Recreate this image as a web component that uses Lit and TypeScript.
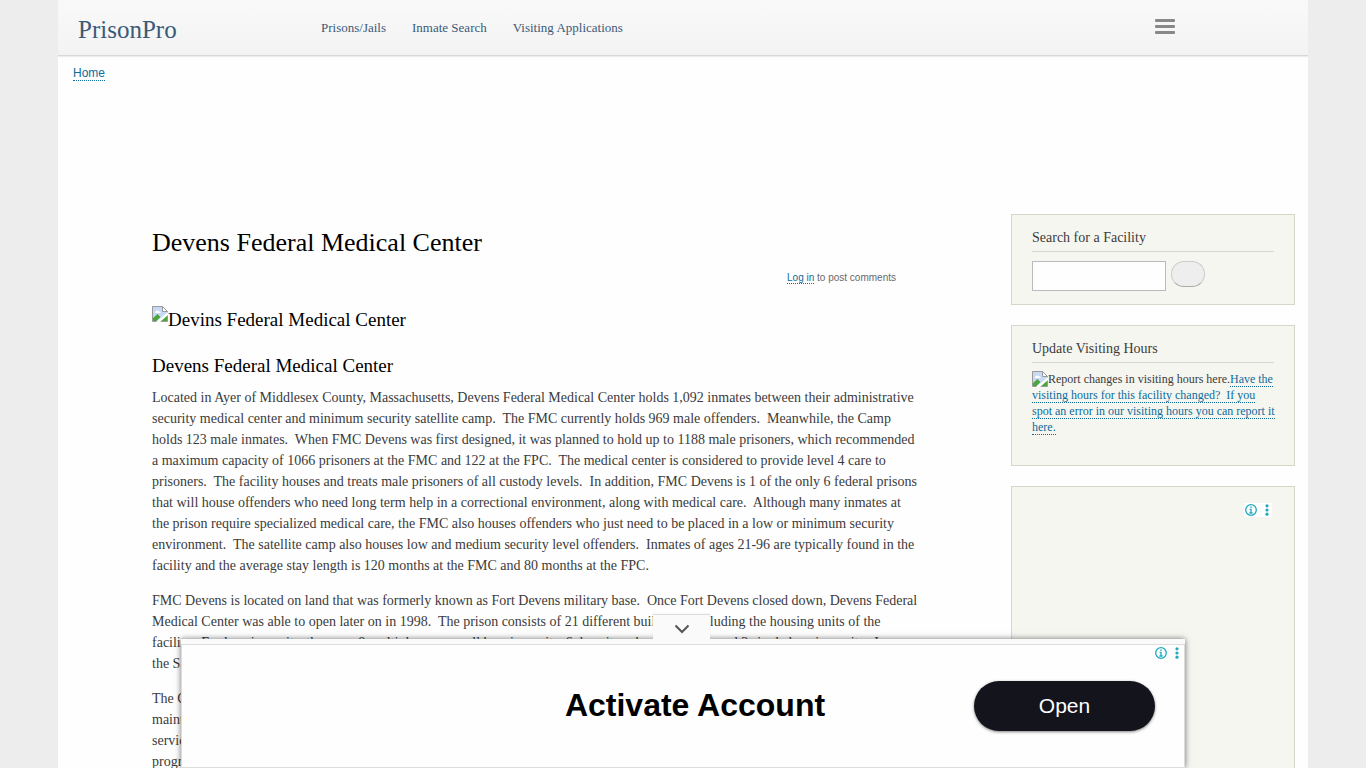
import { LitElement, html, css, svg } from "lit";
import { customElement } from "lit/decorators.js";

const brokenImage = html`<svg class="broken" width="16" height="16" viewBox="0 0 16 16" aria-hidden="true">
  <path d="M.5 15.5V.5h10l5 5v10z" fill="#c7d9f5" stroke="#9a9a9a" />
  <path d="M1 15v-3l4.5-4 3 3-4 4z M7 15l8-7v7z" fill="#4ca63c" />
  <path d="M3 6.5c0-2 3-3 4-1 2-.3 2 1.5 1 1.5H3.5z" fill="#fff" />
  <path d="M10.5.5v5h5z" fill="#fff" stroke="#9a9a9a" />
  <path d="M4 16L16 6v3L8 16z" fill="#fff" />
</svg>`;

const adChoices = html`<svg width="28" height="14" viewBox="0 0 28 14" aria-hidden="true">
  <circle cx="7" cy="7" r="5.3" fill="none" stroke="#21a9bd" stroke-width="1.3" />
  <path d="M7 3.5v1.4M5.6 6.3H7v3.6M5.4 10h3.2" fill="none" stroke="#21a9bd" stroke-width="1.3" />
  ${[2.8, 7, 11.2].map((y) => svg`<circle cx="23" cy=${y} r="1.6" fill="#21a9bd" />`)}
</svg>`;

@customElement("app-root")
export class AppRoot extends LitElement {
  static styles = css`
    :host {
      display: block;
      height: 100vh;
      overflow: hidden;
      background: #ededed;
      color: #3b3b3b;
      font: 14px/21px "Liberation Serif", serif;
    }
    * { box-sizing: border-box; }
    h1, h2, h3, p { margin: 0; font-weight: 400; }
    button { font: inherit; cursor: pointer; }
    .page {
      min-height: 100vh;
      margin: 0 58px;
      background: #fefefe;
    }
    .header {
      display: flex;
      align-items: center;
      height: 56px;
      padding: 0 133px 2px 20px;
      background: linear-gradient(#f9f9f9, #f3f3f3);
      border-bottom: 1px solid #d8d8d8;
      box-shadow: 0 1px 1px #ececec;
    }
    .brand {
      flex: 0 0 243px;
      color: #3b5a78;
      font-size: 25px;
      line-height: 30px;
      padding-top: 6px;
      text-decoration: none;
    }
    .nav { display: flex; gap: 26px; flex: 1; padding-top: 2px; }
    .nav a { color: #3b5a78; font-size: 13px; text-decoration: none; }
    .menu {
      display: flex;
      flex-direction: column;
      gap: 3px;
      width: 20px;
      padding: 0;
      border: 0;
      background: none;
    }
    .menu span { height: 3px; border-radius: 1px; background: #888; }
    .crumb {
      padding: 9px 15px 8px;
      font: 12px/16px "Liberation Sans", sans-serif;
    }
    .link {
      color: #0c6c9c;
      text-decoration: none;
      border-bottom: 1px dotted #0c6c9c;
    }
    .columns {
      display: flex;
      justify-content: space-between;
      padding: 125px 13px 0 94px;
    }
    .article { flex: 0 1 766px; }
    h1 { padding-top: 13px; color: #000; font-size: 26px; line-height: 32px; }
    .comments {
      padding: 11px 22px 0 0;
      text-align: right;
      color: #68696b;
      font: 10px/16px "Liberation Sans", sans-serif;
    }
    .figure, .sub { color: #000; font-size: 19px; line-height: 28px; }
    .figure { padding-top: 20px; display: flex; }
    .sub { padding: 18px 0 7px; }
    .body { display: grid; gap: 14px; }
    .sidebar { display: grid; gap: 20px; flex: 0 0 284px; align-content: start; }
    .block {
      padding: 13px 20px;
      border: 1px solid #d6d6c9;
      background: #f6f6f0;
    }
    .block h2 {
      padding-bottom: 3px;
      border-bottom: 1px solid #d6d6c9;
      font-size: 14px;
      line-height: 20px;
    }
    .search { display: flex; gap: 5px; padding-top: 9px; }
    .search input {
      width: 134px;
      height: 30px;
      border: 1px solid #bbb;
      background: #fefefe;
    }
    .search button {
      width: 34px;
      height: 26px;
      border: 1px solid #ccc;
      border-bottom-color: #aaa;
      border-radius: 13px;
      background: #eee;
    }
    .report { margin-right: -4px; padding: 8px 0 17px; font-size: 12px; line-height: 16px; }
    .report .broken { vertical-align: top; }
    .slot { display: flex; justify-content: flex-end; align-items: flex-start; height: 600px; padding: 16px 22px; }
    .slot svg { background: #fefefe; }
    .banner {
      position: fixed;
      z-index: 1;
      left: 181px;
      right: 181px;
      bottom: 0;
      height: 129px;
      padding-top: 5px;
      background: #fafafa;
      box-shadow: 0 0 6px rgba(0, 0, 0, 0.55);
    }
    .tab {
      position: absolute;
      left: 472px;
      top: -24px;
      width: 57px;
      height: 24px;
      padding: 4px 0 0;
      border: 0;
      background: #fafafa;
      display: grid;
      place-items: center;
      box-shadow: 0 -1px 1px #ddd;
    }
    .ad {
      display: grid;
      grid-template-columns: 1fr auto;
      align-items: center;
      height: 124px;
      padding-right: 29px;
      background: #fefefe;
      border: 1px solid #dcdcdc;
      font-family: "Liberation Sans", sans-serif;
    }
    .ad strong { color: #000; font-size: 32px; line-height: 40px; padding: 0 0 2px 234px; text-align: center; }
    .open {
      width: 181px;
      height: 50px;
      padding: 0 0 2px;
      border: 0;
      border-radius: 25px;
      background: #13141c;
      color: #fff;
      font-size: 21px;
      box-shadow: 0 1px 3px rgba(0, 0, 0, 0.5);
    }
    .choices { position: absolute; right: 3px; top: 7px; display: flex; }
  `;

  render() {
    return html`
      <div class="page">
        <header class="header">
          <a class="brand" href="#">PrisonPro</a>
          <nav class="nav">
            <a href="#">Prisons/Jails</a>
            <a href="#">Inmate Search</a>
            <a href="#">Visiting Applications</a>
          </nav>
          <button class="menu" aria-label="Menu"><span></span><span></span><span></span></button>
        </header>
        <nav class="crumb"><a class="link" href="#">Home</a></nav>
        <div class="columns">
          <main class="article">
            <h1>Devens Federal Medical Center</h1>
            <p class="comments"><a class="link" href="#">Log in</a> to post comments</p>
            <p class="figure">${brokenImage}Devins Federal Medical Center</p>
            <h3 class="sub">Devens Federal Medical Center</h3>
            <div class="body">
              <p>Located in Ayer of Middlesex County, Massachusetts, Devens Federal Medical Center holds 1,092 inmates between their administrative security medical center and minimum security satellite camp.&nbsp; The FMC currently holds 969 male offenders.&nbsp; Meanwhile, the Camp holds 123 male inmates.&nbsp; When FMC Devens was first designed, it was planned to hold up to 1188 male prisoners, which recommended a maximum capacity of 1066 prisoners at the FMC and 122 at the FPC.&nbsp; The medical center is considered to provide level 4 care to prisoners.&nbsp; The facility houses and treats male prisoners of all custody levels.&nbsp; In addition, FMC Devens is 1 of the only 6 federal prisons that will house offenders who need long term help in a correctional environment, along with medical care.&nbsp; Although many inmates at the prison require specialized medical care, the FMC also houses offenders who just need to be placed in a low or minimum security environment.&nbsp; The satellite camp also houses low and medium security level offenders.&nbsp; Inmates of ages 21-96 are typically found in the facility and the average stay length is 120 months at the FMC and 80 months at the FPC.</p>
              <p>FMC Devens is located on land that was formerly known as Fort Devens military base.&nbsp; Once Fort Devens closed down, Devens Federal Medical Center was able to open later on in 1998.&nbsp; The prison consists of 21 different buildings, including the housing units of the facility.&nbsp; For housing units, there are 8 multiple person cell housing units, 6 dormitory housing units, and 2 single housing units.&nbsp; In<br />the Satellite Camp there is dormitory housing.</p>
              <p>The Camp houses inmates who<br />maintain the grounds and provide<br />services to the facility and its<br />programs.</p>
            </div>
          </main>
          <aside class="sidebar">
            <section class="block">
              <h2><label for="q">Search for a Facility</label></h2>
              <form class="search" @submit=${(e: Event) => e.preventDefault()}>
                <input id="q" type="text" /><button aria-label="Search"></button>
              </form>
            </section>
            <section class="block">
              <h2>Update Visiting Hours</h2>
              <p class="report">${brokenImage}Report changes in visiting hours here.<a class="link" href="#">Have the visiting hours for this facility changed?&nbsp; If you spot an error in our visiting hours you can report it here.</a></p>
            </section>
            <section class="block slot">${adChoices}</section>
          </aside>
        </div>
      </div>
      <section class="banner" aria-label="Advertisement">
        <button class="tab" aria-label="Collapse">
          <svg width="16" height="10" viewBox="0 0 16 10"><path d="M1.5 1.5L8 8l6.5-6.5" fill="none" stroke="#555" stroke-width="2" /></svg>
        </button>
        <div class="ad">
          <strong>Activate Account</strong>
          <button class="open">Open</button>
          <span class="choices">${adChoices}</span>
        </div>
      </section>
    `;
  }
}
